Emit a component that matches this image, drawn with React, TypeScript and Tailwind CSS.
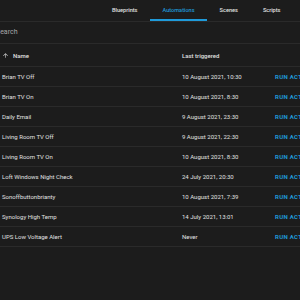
const tabs = ["Blueprints", "Automations", "Scenes", "Scripts"];

const rows = [
  { name: "Brian TV Off", last: "10 August 2021, 10:30" },
  { name: "Brian TV On", last: "10 August 2021, 8:30" },
  { name: "Daily Email", last: "9 August 2021, 23:30" },
  { name: "Living Room TV Off", last: "9 August 2021, 22:30" },
  { name: "Living Room TV On", last: "10 August 2021, 8:30" },
  { name: "Loft Windows Night Check", last: "24 July 2021, 20:30" },
  { name: "Sonoffbuttonbrianty", last: "10 August 2021, 7:39" },
  { name: "Synology High Temp", last: "14 July 2021, 13:01" },
  { name: "UPS Low Voltage Alert", last: "Never" },
];

export default function App() {
  return (
    <div
      className="w-[300px] h-[300px] overflow-hidden bg-[#1c1c1c] text-[#e1e1e1]"
      style={{ fontFamily: "Roboto, 'Liberation Sans', sans-serif" }}
    >
      <div className="flex justify-end h-[22px] border-b border-[#2a2a2a] pr-[7px]">
        {tabs.map((t) => (
          <div
            key={t}
            className={
              "relative flex items-center justify-center px-[12.5px] pb-[1px] text-[5.6px] font-medium " +
              (t === "Automations" ? "text-[#1f9ad9]" : "text-[#e1e1e1]")
            }
          >
            {t}
            {t === "Automations" && (
              <div className="absolute left-0 right-0 bottom-0 h-[2px] bg-[#1f9ad9]" />
            )}
          </div>
        ))}
      </div>

      <div className="flex items-center h-[22px] border-b border-[#2a2a2a] overflow-hidden">
        <span className="-ml-[4px] text-[7px] text-[#a8a8a8]">Search</span>
      </div>

      <div className="flex items-center h-[23px] border-b border-[#2a2a2a] text-[6px] font-medium">
        <div className="flex items-center shrink-0 w-[182px] pl-[2px] gap-[4px]">
          <svg width="7" height="7" viewBox="0 0 24 24" className="fill-[#e1e1e1]">
            <path d="M13 20h-2V8l-5.5 5.5-1.42-1.42L12 4.16l7.92 7.92-1.42 1.42L13 8v12z" />
          </svg>
          Name
        </div>
        <div>Last triggered</div>
      </div>

      {rows.map((r) => (
        <div
          key={r.name}
          className="flex items-center h-[20px] border-b border-[#2a2a2a] text-[6px] whitespace-nowrap"
        >
          <div className="shrink-0 w-[182px] pl-[2px]">{r.name}</div>
          <div className="shrink-0 w-[93px]">{r.last}</div>
          <div className="shrink-0 font-bold text-[#1f9ad9] tracking-[0.3px]">RUN ACTIONS</div>
        </div>
      ))}
    </div>
  );
}
